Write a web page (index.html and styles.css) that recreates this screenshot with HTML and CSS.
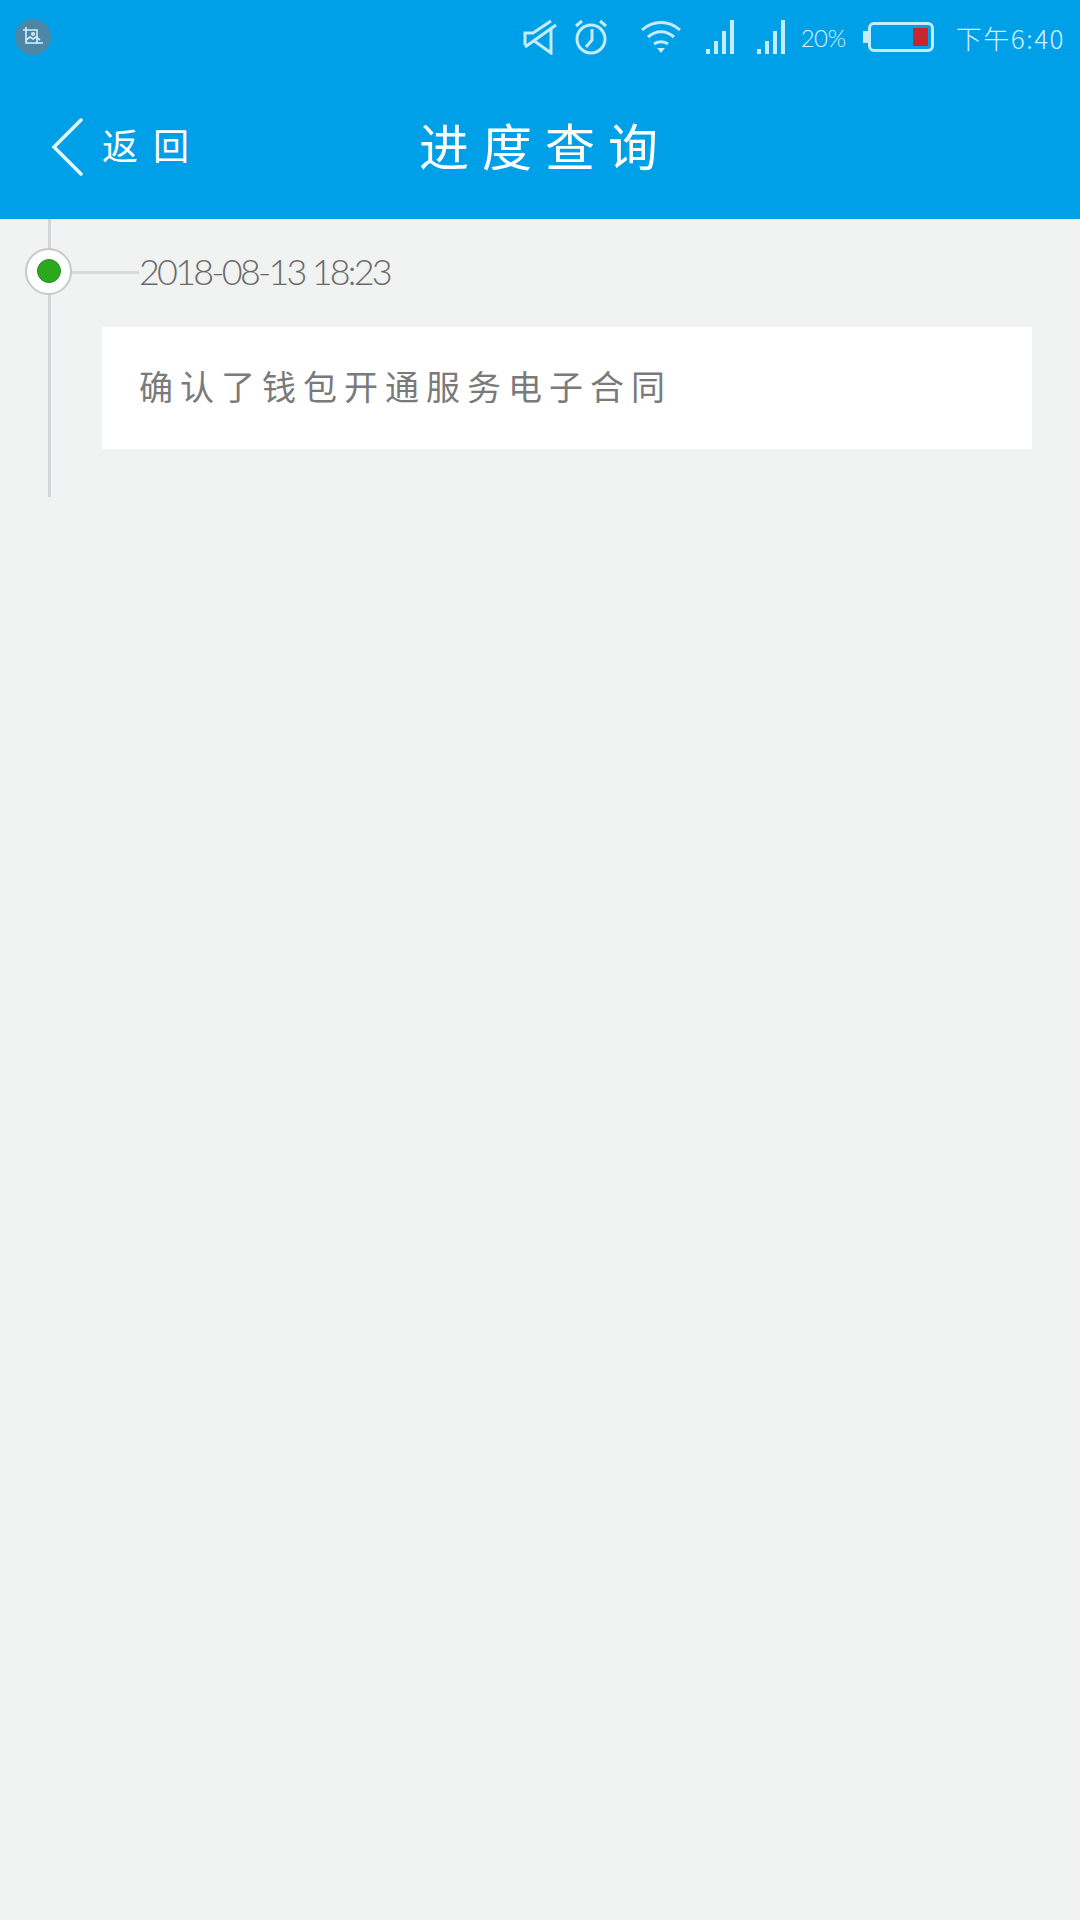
FILE: index.html
```html
<!DOCTYPE html>
<html lang="zh-CN">
<head>
  <meta charset="UTF-8">
  <title>进度查询</title>
  <link rel="stylesheet" href="styles.css">
</head>
<body>
  <div class="header">
    <!-- 状态栏 -->
    <div class="statusbar">
      <div class="shot-badge">
        <svg width="20" height="20" viewBox="0 0 20 20" fill="none" stroke="#d5eef9" stroke-width="1.6">
          <path d="M3 0v16h17"/>
          <path d="M0 3h14v14"/>
          <path d="M3 13l4-3 3 2 3-2 4 3"/>
          <circle cx="10" cy="7" r="1.2"/>
        </svg>
      </div>
      <div class="status-icons">
        <svg class="ic-mute" width="36" height="36" viewBox="0 0 36 36" fill="none" stroke="#c5ecfb" stroke-width="3">
          <path d="M29 10v24L11 21"/>
          <path d="M3 26V14h8L29 2"/>
          <path d="M3 28L34 6"/>
        </svg>
        <svg class="ic-alarm" width="36" height="36" viewBox="0 0 36 36" fill="none" stroke="#c5ecfb" stroke-width="3">
          <circle cx="18" cy="20" r="14"/>
          <path d="M19 10v11l-6 7"/>
          <path d="M3 7l6-5M33 7l-6-5"/>
        </svg>
        <svg class="ic-wifi" width="42" height="36" viewBox="0 0 42 36" fill="none" stroke="#c5ecfb" stroke-width="3">
          <path d="M2 11c11-10 27-10 38 0"/>
          <path d="M8 18c8-7 18-7 26 0"/>
          <path d="M14 25c4-3 10-3 14 0"/>
          <path d="M17 29h8l-4 5z" fill="#c5ecfb" stroke="none"/>
        </svg>
        <svg class="ic-signal" width="29" height="34" viewBox="0 0 29 34" fill="#c5ecfb">
          <rect x="0" y="29" width="4" height="5"/>
          <rect x="8" y="21" width="4" height="13"/>
          <rect x="16" y="11" width="4" height="23"/>
          <rect x="24" y="0" width="4" height="34"/>
        </svg>
        <svg class="ic-signal second" width="29" height="34" viewBox="0 0 29 34" fill="#c5ecfb">
          <rect x="0" y="29" width="4" height="5"/>
          <rect x="8" y="21" width="4" height="13"/>
          <rect x="16" y="11" width="4" height="23"/>
          <rect x="24" y="0" width="4" height="34"/>
        </svg>
        <span class="percent">20%</span>
        <div class="battery">
          <div class="battery-tip"></div>
          <div class="battery-body">
            <div class="battery-level"></div>
          </div>
        </div>
        <span class="clock">下午6:40</span>
      </div>
    </div>
    <!-- 导航栏 -->
    <div class="navbar">
      <div class="back">
        <svg width="32" height="58" viewBox="0 0 32 58" fill="none" stroke="#e6f6fd" stroke-width="3.5" stroke-linecap="round">
          <path d="M30 2L3 29l27 27"/>
        </svg>
        <span class="back-text">返回</span>
      </div>
      <h1 class="title">进度查询</h1>
    </div>
  </div>

  <!-- 进度 -->
  <div class="timeline">
    <div class="step">
      <div class="step-head">
        <div class="node"><div class="node-dot"></div></div>
        <div class="connector"></div>
        <span class="step-time">2018-08-13 18:23</span>
      </div>
      <div class="step-card">确认了钱包开通服务电子合同</div>
    </div>
  </div>
</body>
</html>
```

FILE: styles.css
```css
* {
  box-sizing: border-box;
}
body {
  margin: 0;
  min-height: 1920px;
  background: #f1f3f3;
  font-family: "Noto Sans CJK SC", "Liberation Sans", sans-serif;
  color: #757575;
}
.header {
  background: #00a0e9;
  height: 219px;
}
.statusbar {
  height: 75px;
  padding: 19px 15px 0 15px;
  display: flex;
  justify-content: space-between;
  align-items: flex-start;
  color: #d5f2fd;
}
.shot-badge {
  width: 36px;
  height: 36px;
  border-radius: 50%;
  background: #4c87a8;
  display: flex;
  justify-content: center;
  align-items: center;
}
.status-icons {
  display: flex;
  align-items: center;
  height: 36px;
}
.ic-alarm {
  margin-left: 15px;
}
.ic-wifi {
  margin-left: 31px;
}
.ic-signal {
  margin-left: 24px;
}
.ic-signal.second {
  margin-left: 22px;
}
.percent {
  margin-left: 15px;
  font-family: "Lato", sans-serif;
  font-size: 24px;
  font-weight: 300;
  letter-spacing: -0.5px;
}
.battery {
  display: flex;
  align-items: center;
  margin-left: 17px;
}
.battery-tip {
  width: 5px;
  height: 12px;
  background: #c5ecfb;
}
.battery-body {
  width: 66px;
  height: 30px;
  border: 3px solid #c5ecfb;
  border-radius: 6px;
  padding: 3px;
  display: flex;
  justify-content: flex-end;
}
.battery-level {
  width: 15px;
  background: #c9252f;
}
.clock {
  margin-left: 22px;
  font-size: 26px;
  font-weight: 300;
  letter-spacing: 1.5px;
}
.navbar {
  height: 144px;
  padding: 0 0 0 51px;
  display: flex;
  align-items: center;
}
.back {
  display: flex;
  align-items: center;
  color: #fff;
}
.back-text {
  margin: 0 0 6px 19px;
  font-size: 36px;
  letter-spacing: 15px;
  line-height: 1;
}
.title {
  margin: 0 0 6px 215px;
  font-size: 50px;
  font-weight: 400;
  letter-spacing: 13px;
  line-height: 1;
  color: #fff;
  white-space: nowrap;
}
.timeline {
  padding-left: 25px;
}
.step {
  position: relative;
  padding-bottom: 48px;
  width: 1007px;
}
.step::before {
  content: "";
  position: absolute;
  left: 23px;
  top: 0;
  bottom: 0;
  width: 3px;
  background: #d2d6d8;
}
.step-head {
  display: flex;
  align-items: center;
  height: 104px;
  margin-bottom: 4px;
}
.node {
  position: relative;
  width: 47px;
  height: 47px;
  border-radius: 50%;
  border: 2px solid #c8c8c8;
  background: #fff;
  display: flex;
  justify-content: center;
  align-items: center;
}
.node-dot {
  width: 24px;
  height: 24px;
  border-radius: 50%;
  background: #2aa81e;
  border: 1px solid #2b8a22;
}
.connector {
  width: 67px;
  height: 3px;
  margin-top: 3px;
  background: #d8dbdc;
}
.step-time {
  font-family: "Lato", "Liberation Sans", sans-serif;
  font-size: 36px;
  font-weight: 300;
  letter-spacing: -2.8px;
  color: #6a6a6a;
  white-space: nowrap;
}
.step-card {
  margin-left: 77px;
  height: 122px;
  padding: 0 0 6px 37px;
  background: #fff;
  display: flex;
  align-items: center;
  font-size: 34px;
  letter-spacing: 7px;
  color: #7a7a7a;
}
```
